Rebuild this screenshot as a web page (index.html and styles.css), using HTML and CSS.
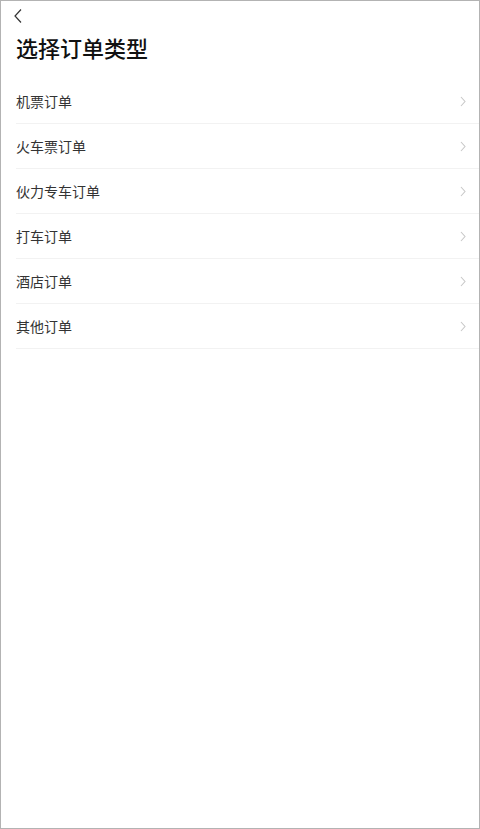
FILE: index.html
```html
<!DOCTYPE html>
<html lang="zh-CN">
<head>
<meta charset="utf-8">
<title>选择订单类型</title>
<link rel="stylesheet" href="styles.css">
</head>
<body>
<div class="page">
  <div class="nav">
    <svg class="back" width="10" height="16" viewBox="0 0 10 16"><path d="M8 1.5 L2 8 L8 14.5" fill="none" stroke="#333" stroke-width="1.2"/></svg>
  </div>
  <h1 class="title">选择订单类型</h1>
  <ul class="list">
    <li class="item"><span>机票订单</span><svg class="arrow" width="6" height="11" viewBox="0 0 6 11"><path d="M1 1 L5 5.5 L1 10" fill="none" stroke="#c8c8c8" stroke-width="1.1"/></svg></li>
    <li class="item"><span>火车票订单</span><svg class="arrow" width="6" height="11" viewBox="0 0 6 11"><path d="M1 1 L5 5.5 L1 10" fill="none" stroke="#c8c8c8" stroke-width="1.1"/></svg></li>
    <li class="item"><span>伙力专车订单</span><svg class="arrow" width="6" height="11" viewBox="0 0 6 11"><path d="M1 1 L5 5.5 L1 10" fill="none" stroke="#c8c8c8" stroke-width="1.1"/></svg></li>
    <li class="item"><span>打车订单</span><svg class="arrow" width="6" height="11" viewBox="0 0 6 11"><path d="M1 1 L5 5.5 L1 10" fill="none" stroke="#c8c8c8" stroke-width="1.1"/></svg></li>
    <li class="item"><span>酒店订单</span><svg class="arrow" width="6" height="11" viewBox="0 0 6 11"><path d="M1 1 L5 5.5 L1 10" fill="none" stroke="#c8c8c8" stroke-width="1.1"/></svg></li>
    <li class="item"><span>其他订单</span><svg class="arrow" width="6" height="11" viewBox="0 0 6 11"><path d="M1 1 L5 5.5 L1 10" fill="none" stroke="#c8c8c8" stroke-width="1.1"/></svg></li>
  </ul>
</div>
</body>
</html>
```
FILE: styles.css
```css
html, body {
  margin: 0;
  padding: 0;
  background: #fff;
}
body {
  font-family: "Noto Sans CJK SC", "Noto Sans", sans-serif;
  color: #222;
}
.page {
  width: 480px;
  height: 829px;
  box-sizing: border-box;
  border: 1px solid #b3b3b3;
  background: #fff;
}
.nav {
  height: 22px;
  padding: 7px 0 0 12px;
  box-sizing: border-box;
  display: flex;
  align-items: flex-start;
}
.back {
  display: block;
}
.title {
  margin: 9px 0 0 15px;
  font-size: 22px;
  line-height: 30px;
  font-weight: 500;
  color: #111;
}
.list {
  list-style: none;
  margin: 17px 0 0 15px;
  padding: 0;
}
.item {
  height: 44px;
  border-bottom: 1px solid #f2f2f2;
  display: flex;
  align-items: center;
  justify-content: space-between;
  padding-right: 13px;
  font-size: 14px;
  color: #333;
}
.arrow {
  display: block;
}
```
